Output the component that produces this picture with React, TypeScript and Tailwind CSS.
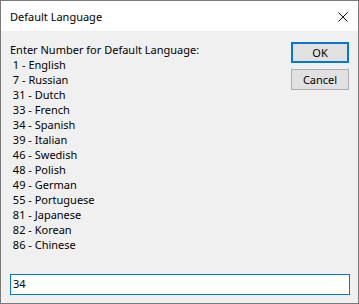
import React from "react";

const langs = [
  " 1 - English",
  " 7 - Russian",
  " 31 - Dutch",
  " 33 - French",
  " 34 - Spanish",
  " 39 - Italian",
  " 46 - Swedish",
  " 48 - Polish",
  " 49 - German",
  " 55 - Portuguese",
  " 81 - Japanese",
  " 82 - Korean",
  " 86 - Chinese",
];

export default function App() {
  const sans = { fontFamily: '"Noto Sans", "Liberation Sans", Arial, sans-serif' };
  return (
    <div className="w-[359px] h-[304px] border border-[#7a7a7a] bg-[#f0f0f0] flex flex-col box-border text-black" style={sans}>
      <div className="h-[30px] bg-white flex items-center justify-between pl-[9px] pr-[10px] shrink-0">
        <span className="text-[11px] leading-none">
          Default Language
        </span>
        <svg width="10" height="10" viewBox="0 0 10 10" className="mt-[1px]">
          <path d="M0.5 0.5 L9.5 9.5 M9.5 0.5 L0.5 9.5" stroke="#000" strokeWidth="1" fill="none" />
        </svg>
      </div>
      <div className="flex-1 flex flex-col pl-[9px] pr-[9px] pb-[8px]">
        <div className="flex justify-between pt-[11px]">
          <div className="text-[11px] leading-[15px] whitespace-pre">
            <div>Enter Number for Default Language:</div>
            {langs.map((l) => (
              <div key={l}>{l}</div>
            ))}
          </div>
          <div className="flex flex-col gap-[6px]">
            <button className="w-[58px] h-[21px] border-2 border-[#0078d7] bg-[#e1e1e1] text-[11px] leading-none flex items-center justify-center">
              OK
            </button>
            <button className="w-[58px] h-[21px] border border-[#adadad] bg-[#e1e1e1] text-[11px] leading-none flex items-center justify-center">
              Cancel
            </button>
          </div>
        </div>
        <div className="mt-auto w-[340px] h-[21px] border border-[#0078d7] bg-white flex items-center pl-[2px] text-[11px]">
          34
        </div>
      </div>
    </div>
  );
}
